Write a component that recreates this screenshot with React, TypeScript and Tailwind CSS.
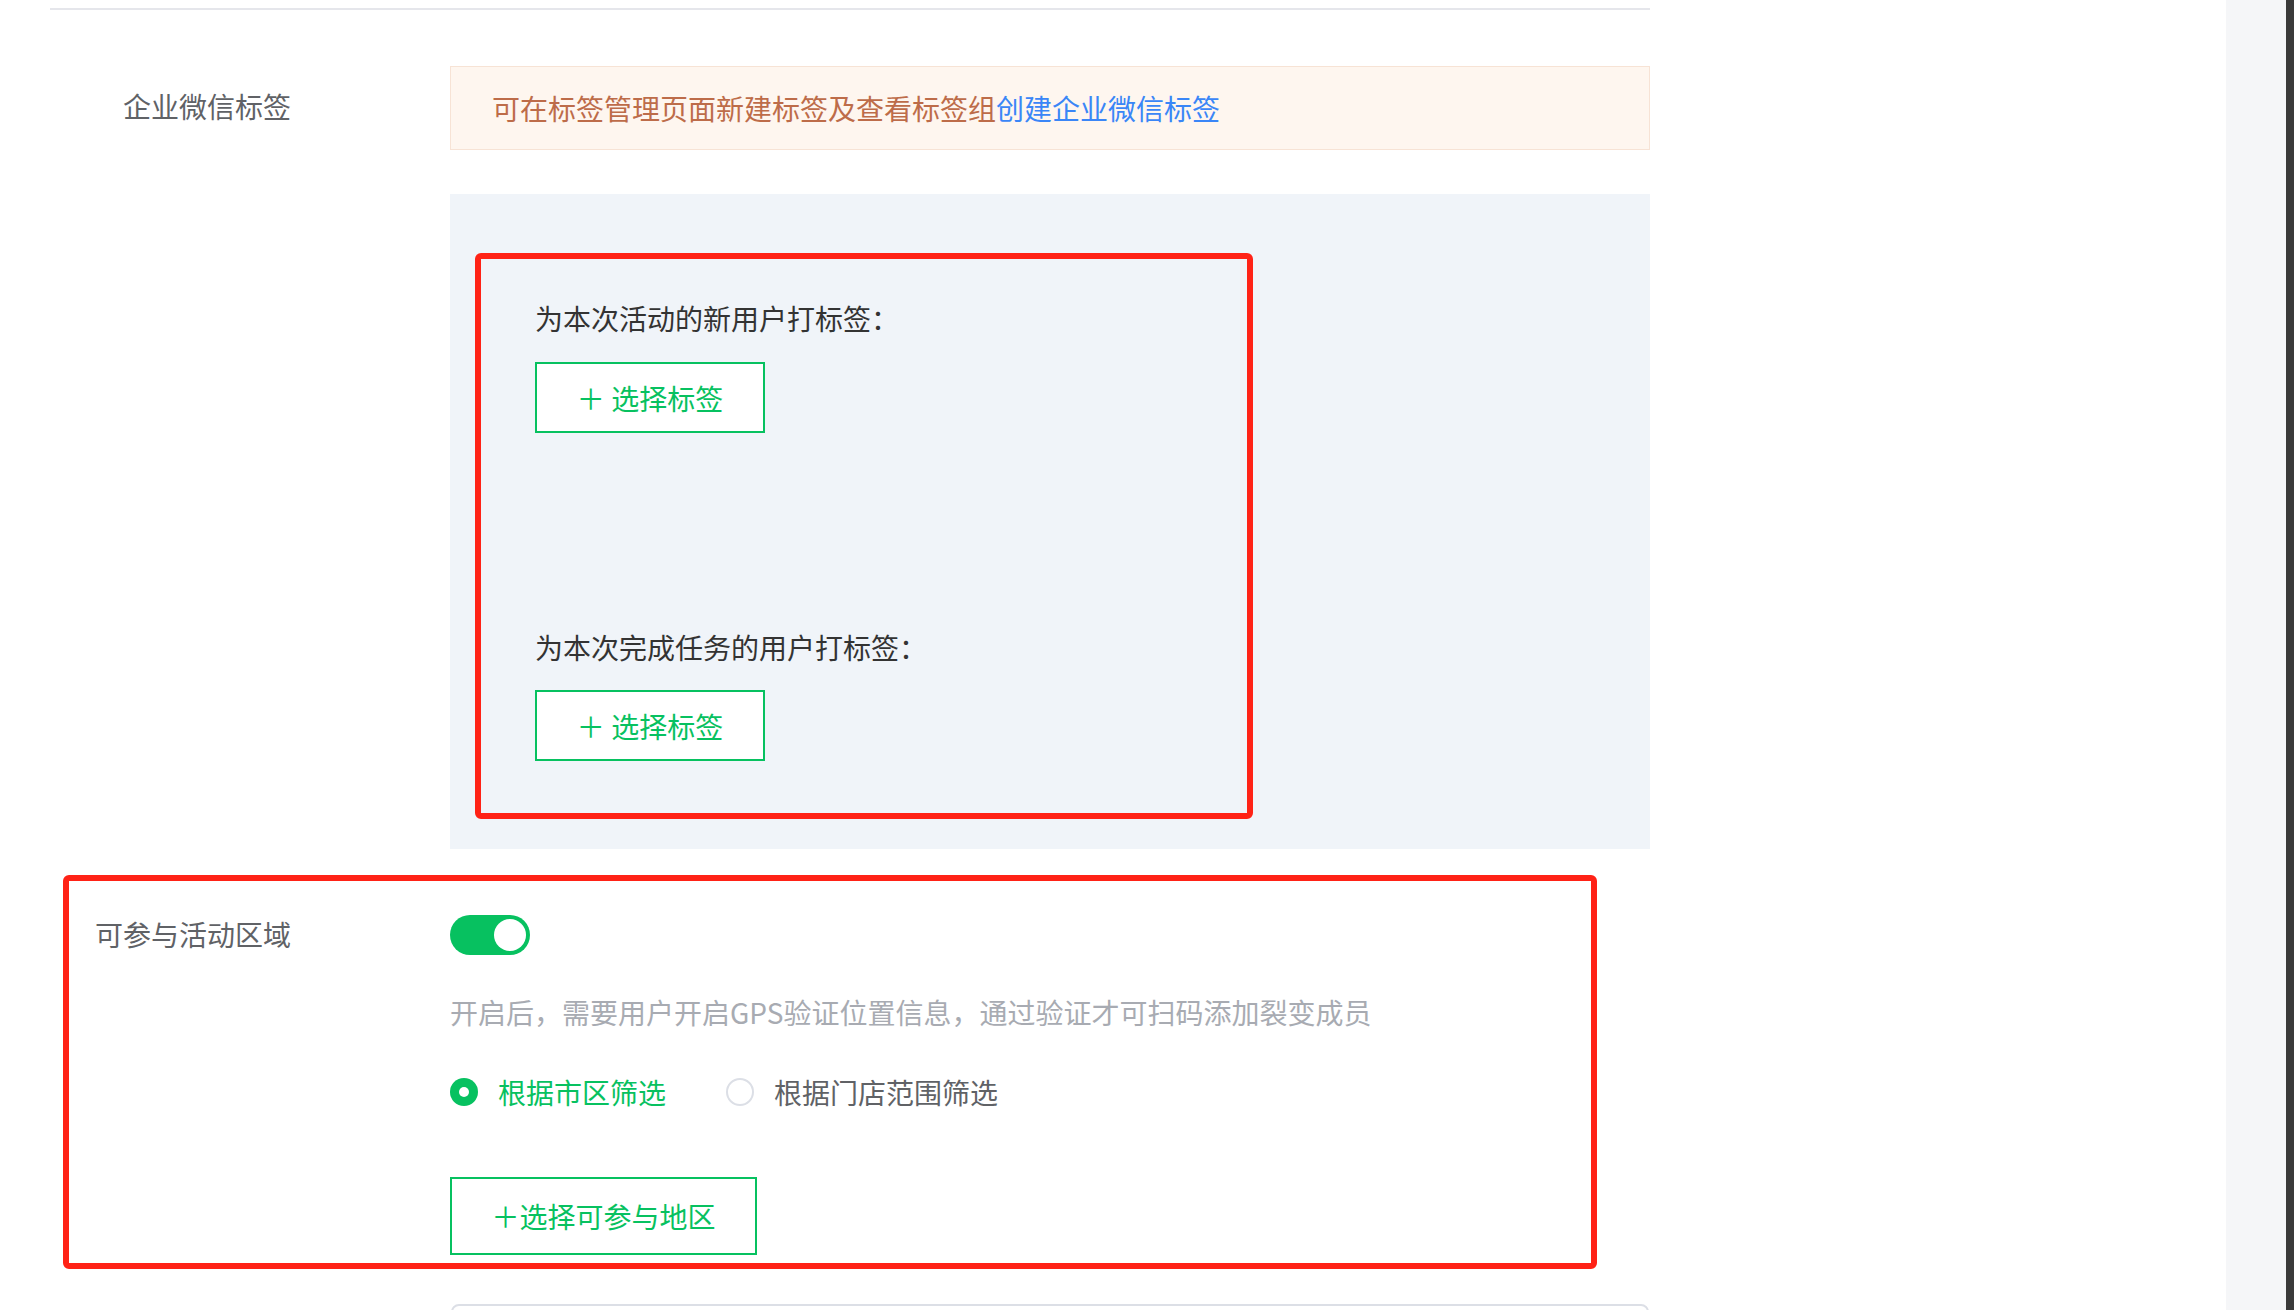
const font = { fontFamily: '"Noto Sans CJK SC", "Noto Sans", sans-serif' };

function TagButton() {
  return (
    <button className="flex h-[71px] w-[230px] items-center justify-center border-2 border-[#07c160] bg-white text-[28px] leading-[40px] text-[#07c160]">
      ＋ 选择标签
    </button>
  );
}

function Radio({ checked, label }: { checked: boolean; label: string }) {
  return (
    <label className="flex items-center gap-[20px]">
      {checked ? (
        <span className="flex h-[28px] w-[28px] items-center justify-center rounded-full bg-[#07c160]">
          <span className="h-[10px] w-[10px] rounded-full bg-white" />
        </span>
      ) : (
        <span className="h-[28px] w-[28px] rounded-full border-2 border-[#dcdfe6] bg-white" />
      )}
      <span className={checked ? "text-[#07c160]" : "text-[#606266]"}>
        {label}
      </span>
    </label>
  );
}

export default function App() {
  return (
    <div
      className="flex h-[1310px] w-full overflow-hidden bg-white text-[28px] leading-[40px]"
      style={font}
    >
      <main className="flex-1 pl-[50px] pt-[8px]">
        <div className="w-[1600px]">
          <div className="h-[2px] bg-[#e5e6eb]" />

          {/* 企业微信标签 */}
          <div className="mt-[56px] flex items-start">
            <div className="w-[400px] pr-[159px] pt-[20px] text-right text-[#606266]">
              企业微信标签
            </div>
            <div className="flex-1">
              <div className="flex h-[84px] items-center border border-[#f7e3d5] bg-[#fef6ef] pl-[41px]">
                <span className="text-[#bd6c49]">可在标签管理页面新建标签及查看标签组</span>
                <span className="text-[#3a86f7]">创建企业微信标签</span>
              </div>
              <div className="mt-[44px] bg-[#f0f4f9] pb-[30px] pl-[25px] pt-[59px]">
                <div className="w-[778px] rounded-[6px] border-[6px] border-[#ff2216] pb-[52px] pl-[54px] pt-[39px]">
                  <p className="text-[#333333]">为本次活动的新用户打标签：</p>
                  <div className="mt-[24px]">
                    <TagButton />
                  </div>
                  <p className="mt-[194px] text-[#333333]">为本次完成任务的用户打标签：</p>
                  <div className="mt-[23px]">
                    <TagButton />
                  </div>
                </div>
              </div>
            </div>
          </div>

          {/* 可参与活动区域 */}
          <div className="ml-[13px] mt-[26px] flex w-[1534px] items-start rounded-[6px] border-[6px] border-[#ff2216] pb-[8px]">
            <div className="w-[381px] pr-[159px] pt-[33px] text-right text-[#606266]">
              可参与活动区域
            </div>
            <div className="flex-1 pt-[34px]">
              <div className="flex h-[40px] w-[80px] items-center justify-end rounded-full bg-[#07c160] pr-[4px]">
                <span className="h-[32px] w-[32px] rounded-full bg-white" />
              </div>
              <p className="mt-[37px] text-[#a8abb2]">
                开启后，需要用户开启GPS验证位置信息，通过验证才可扫码添加裂变成员
              </p>
              <div className="mt-[40px] flex items-center gap-[60px]">
                <Radio checked label="根据市区筛选" />
                <Radio checked={false} label="根据门店范围筛选" />
              </div>
              <button className="mt-[65px] flex h-[78px] w-[307px] items-center justify-center border-2 border-[#07c160] bg-white text-[#07c160]">
                ＋选择可参与地区
              </button>
            </div>
          </div>

          <div className="ml-[401px] mt-[35px] h-[60px] w-[1198px] rounded-[8px] border-2 border-[#dcdfe6]" />
        </div>
      </main>
      <aside className="w-[60px] bg-[#f5f6f8]" />
      <div className="w-[8px] bg-[#3a3a3a]" />
    </div>
  );
}
